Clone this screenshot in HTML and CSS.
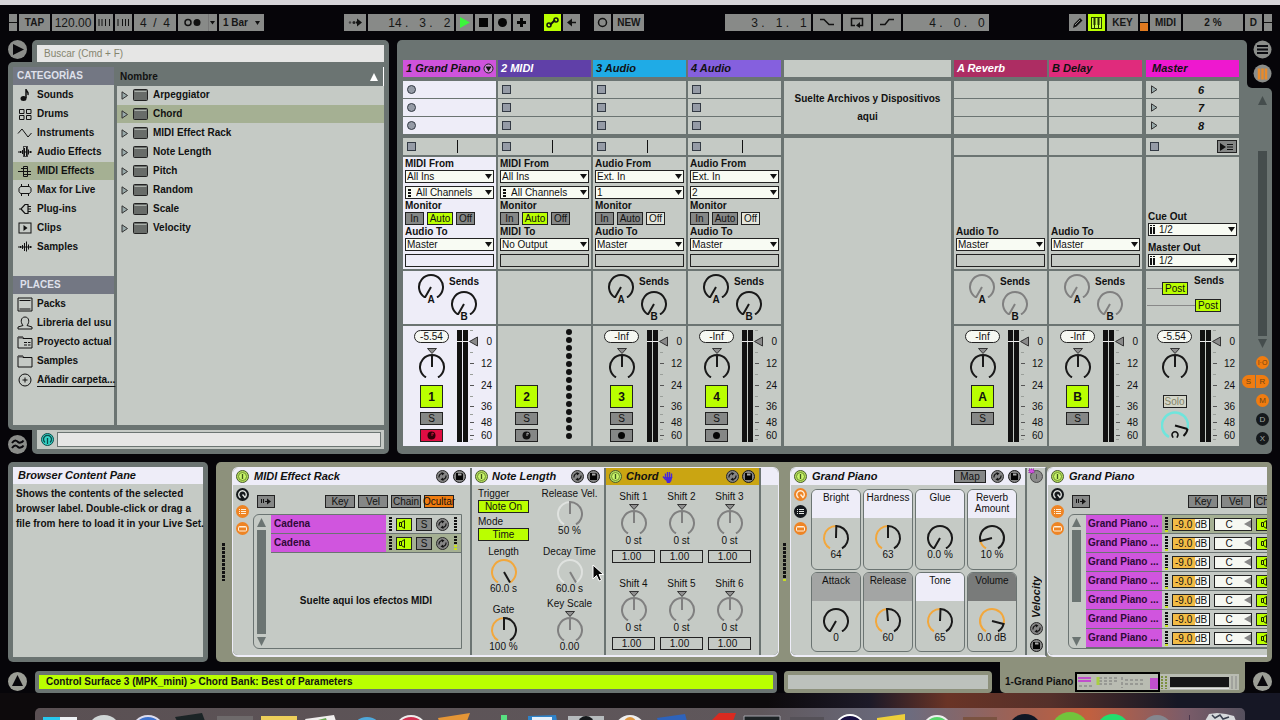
FILE: index.html
```html
<!DOCTYPE html>
<html lang="es">
<head>
<meta charset="utf-8">
<title>Live Set</title>
<link rel="stylesheet" href="styles.css">
</head>
<body>
<svg class="defs" aria-hidden="true">
  <symbol id="knob-min" viewBox="0 0 28 25"><path d="M14 14L8 24.4A12 12 0 1 1 20 24.4"/></symbol>
  <symbol id="knob-mid" viewBox="0 0 28 31"><path d="M8 30.4A12 12 0 1 1 20 30.4M14 20V8"/><path class="tri" d="M9.500 1.500h9l-4.500 5z"/></symbol>
  <symbol id="power" viewBox="0 0 13 13"><circle cx="6.500" cy="6.500" r="6" fill="#b4e05a" stroke="#4a5a30"/><circle cx="6.500" cy="6.500" r="4" fill="#c9f56a" stroke="#5d7a2a" stroke-width=".8"/><path d="M6.500 4v5" stroke="#3f5a1a" stroke-width="1.300"/></symbol>
  <symbol id="swap" viewBox="0 0 13 13"><circle cx="6.500" cy="6.500" r="6" fill="#858585" stroke="#2a2a2a"/><path d="M3 7.500a3.500 3.500 0 0 1 3-4M10 5.500a3.500 3.500 0 0 1-3 4" fill="none" stroke="#111" stroke-width="1.200"/><path d="M5.500 2l3 1.500-2.500 2zM7.500 11l-3-1.500 2.500-2z" fill="#111"/></symbol>
  <symbol id="save" viewBox="0 0 13 13"><circle cx="6.500" cy="6.500" r="6" fill="#858585" stroke="#1a1a1a"/><path d="M3 3h6l1 1v6H3z" fill="#050505"/><rect x="5" y="3.500" width="3.500" height="2" fill="#aaa"/></symbol>
  <symbol id="macro" viewBox="0 0 13 13"><circle cx="6.500" cy="6.500" r="6.500" class="disc"/><path d="M4.500 9.800a3.800 3.800 0 1 1 4 0M6.500 6.500l2.500 3" fill="none" class="ink" stroke-width="1.400"/></symbol>
  <symbol id="list" viewBox="0 0 13 13"><circle cx="6.500" cy="6.500" r="6.500" class="disc"/><path d="M5 4.500h5M5 6.500h5M5 8.500h5M3 4.500h1M3 6.500h1M3 8.500h1" class="ink"/></symbol>
  <symbol id="panel" viewBox="0 0 13 13"><circle cx="6.500" cy="6.500" r="6.500" class="disc"/><rect x="2.500" y="4.500" width="8" height="4.500" rx="1" fill="none" class="ink"/><path d="M3 5h7" class="ink"/></symbol>
  <symbol id="speaker" viewBox="0 0 12 9"><path d="M3.500 2.500h2v4h-2zM5.500 2.500L8.500 .5v8L5.500 6.500" fill="none" stroke="#182000"/></symbol>
  <symbol id="auto" viewBox="0 0 12 9"><path d="M1.500 2v4M3.500 2v4M5 4.500h3" stroke="#111"/><path d="M7 1.500l4 3-4 3z" fill="#111"/></symbol>
  <symbol id="dots" viewBox="0 0 3 38"><path d="M1.500 0v40" stroke="#111" stroke-width="3" stroke-dasharray="3 1"/></symbol>
  <symbol id="dots-s" viewBox="0 0 3 15"><path d="M1.500 0v15" stroke="#111" stroke-width="3" stroke-dasharray="2 1"/></symbol>
  <symbol id="tri" viewBox="0 0 8 9"><path d="M1 .8v7.400l5.500-3.700z" fill="#9aa" stroke="#333"/></symbol>
  <symbol id="device" viewBox="0 0 15 12"><rect x=".5" y=".5" width="14" height="11" rx="1" class="devbox"/><path d="M1.500 2.500h12" stroke="#aab0aa"/></symbol>
  <symbol id="meter" viewBox="0 0 39 120">
    <path d="M3.500 4v112M9.500 4v112" stroke="#111" stroke-width="5"/><path d="M1 15.500h11" stroke="#eee"/>
    <path d="M13.500 15.500l8-4.500v9z" fill="#8a8a8a" stroke="#333"/>
    <path d="M14 37.500h4M14 59.500h4M14 80.500h4M14 96.500h4M14 109.500h4" stroke="#555"/>
    <path d="M14 4.500h3M14 26.500h3M14 48.500h3M14 70.500h3M14 88.500h3M14 103.500h3M14 113.500h3" stroke="#9a9f9a"/>
  </symbol>
  <symbol id="loud" viewBox="0 0 14 14"><path d="M2.500 6v2M4.500 5v4M6.500 3v8M8.500 1.500v10M10.500 4.500v5M12.500 6v2M0 7h14" stroke="#111"/></symbol>
</svg>

<div class="menubar-edge"></div>

<header class="toolbar">
  <div class="group">
    <span class="stub"></span>
    <button class="tb w31">TAP</button>
    <input class="tb w42 num" aria-label="Tempo" value="120.00">
    <button class="tb w17" aria-label="Nudge down"><svg width="13" height="9"><path d="M1 1v7M4 1v7M7.500 1v7M11.500 1v7" stroke="#111"/></svg></button>
    <button class="tb w17" aria-label="Nudge up"><svg width="13" height="9"><path d="M1 1v7M5.500 1v7M8.500 1v7M11.500 1v7" stroke="#111"/></svg></button>
    <input class="tb w42 num" aria-label="Time signature" value="4  /  4">
    <button class="tb w39" aria-label="Metronome"><svg width="36" height="17"><circle cx="8" cy="8.500" r="3" fill="none" stroke="#111" stroke-width="1.500"/><circle cx="17" cy="8.500" r="3.500" fill="#111"/><path d="M28.500 0v17" stroke="#777"/><path d="M30 7h5l-2.500 3.500z" fill="#111"/></svg></button>
    <select class="tb w45 quant" aria-label="Quantization"><option>1 Bar</option></select>
  </div>
  <div class="group">
    <button class="tb w22" aria-label="Follow"><svg width="14" height="9"><circle cx="2" cy="4.500" r="1.200" fill="#444"/><circle cx="6" cy="4.500" r="1.500" fill="#222"/><path d="M8 4.500h2" stroke="#111" stroke-width="2"/><path d="M9 .5l5 4-5 4z" fill="#111"/></svg></button>
    <output class="tb w86 pos"><span>14 .</span><span>3 .</span><span>2</span></output>
    <button class="tb w17" aria-label="Play"><svg width="11" height="11"><path d="M1 0v11l10-5.500z" fill="#3cf53c"/></svg></button>
    <button class="tb w17" aria-label="Stop"><svg width="9" height="9"><rect width="9" height="9" fill="#050505"/></svg></button>
    <button class="tb w17" aria-label="Record"><svg width="9" height="9"><circle cx="4.500" cy="4.500" r="4.500" fill="#050505"/></svg></button>
    <button class="tb w17" aria-label="Overdub"><svg width="9" height="9"><path d="M4.500 0v9M0 4.500h9" stroke="#050505" stroke-width="3"/></svg></button>
    <button class="tb w17 on space" aria-label="Automation arm"><svg width="13" height="11"><path d="M4 8l5-5" stroke="#111" stroke-width="2"/><circle cx="3" cy="8" r="2" fill="none" stroke="#111" stroke-width="1.500"/><circle cx="10" cy="3" r="2" fill="none" stroke="#111" stroke-width="1.500"/></svg></button>
    <button class="tb w17" aria-label="Re-enable automation"><svg width="9" height="9"><path d="M3 4.500h6" stroke="#111" stroke-width="1.500"/><path d="M5 .5v8l-5-4z" fill="#111"/></svg></button>
    <button class="tb w17 space" aria-label="Session record"><svg width="11" height="11"><circle cx="5.500" cy="5.500" r="4" fill="none" stroke="#111" stroke-width="1.500"/></svg></button>
    <button class="tb w31">NEW</button>
  </div>
  <div class="group">
    <output class="tb w86 pos"><span>3 .</span><span>1 .</span><span>1</span></output>
    <button class="tb w28" aria-label="Punch in"><svg width="16" height="9"><path d="M1 1.500h4l5 5h5" fill="none" stroke="#111" stroke-width="1.500"/></svg></button>
    <button class="tb w28" aria-label="Loop"><svg width="14" height="11"><path d="M5 8.500H1.500v-7h11v7H9" fill="none" stroke="#111" stroke-width="1.500"/><path d="M10 5v6l-4-2.500z" fill="#111"/></svg></button>
    <button class="tb w28" aria-label="Punch out"><svg width="16" height="9"><path d="M1 6.500h5l4-5h5" fill="none" stroke="#111" stroke-width="1.500"/></svg></button>
    <output class="tb w86 pos"><span>4 .</span><span>0 .</span><span>0</span></output>
  </div>
  <div class="group">
    <button class="tb w17" aria-label="Draw mode"><svg width="11" height="12"><path d="M1 11l1-4 6-6 2.500 2.500-6 6z" fill="#111"/><path d="M3 8l5-5" stroke="#8a8c8a"/></svg></button>
    <button class="tb w17 on" aria-label="Computer keyboard"><svg width="11" height="12"><rect x=".5" y=".5" width="10" height="11" fill="#c5ff40" stroke="#223300"/><path d="M3.500 1v7M7.500 1v7" stroke="#223300" stroke-width="2"/><path d="M3.500 8v3M7.500 8v3" stroke="#223300"/></svg></button>
    <button class="tb w31">KEY</button>
    <span class="stub lit"></span>
    <button class="tb w31">MIDI</button>
    <output class="tb w60">2 %</output>
    <button class="tb w17">D</button>
    <span class="stub"></span>
  </div>
</header>

<main class="main">
  <section class="browser">
    <div class="row-top">
      <button class="round" aria-label="Show browser"><svg width="19" height="19"><circle cx="9.500" cy="9.500" r="9.500" fill="#8b8d8a"/><path d="M5 4v11l11-5.500z" fill="#08070b"/></svg></button>
      <div class="search"><input aria-label="Buscar" placeholder="Buscar (Cmd + F)"></div>
    </div>
    <div class="browser-body">
      <nav class="cats">
        <h2>CATEGORÌAS</h2>
        <a href="#"><svg width="14" height="14"><ellipse cx="5.500" cy="10.500" rx="3" ry="2.500" fill="#111"/><path d="M8 10V1c0 3 3 2 2 6" fill="none" stroke="#111" stroke-width="1.500"/></svg>Sounds</a>
        <a href="#"><svg width="14" height="14"><path d="M1.500 2.500h4.500v4H1.500zM8.500 2.500h4.500v4H8.500zM1.500 8.500h4.500v4H1.500zM8.500 8.500h4.500v4H8.500z" fill="none" stroke="#111"/></svg>Drums</a>
        <a href="#"><svg width="14" height="14"><path d="M0 7.500L4 3l6 8 3.500-4" fill="none" stroke="#111"/></svg>Instruments</a>
        <a href="#"><svg width="14" height="14"><use href="#loud" width="14" height="14"/><rect x="5.500" y="1.500" width="4" height="10" fill="none" stroke="#444"/></svg>Audio Effects</a>
        <a href="#" class="sel"><svg width="14" height="14"><path d="M3 4.500h6M0 7.500h13M6 10.500h7M5.500 2.500h4v10h-4z" fill="none" stroke="#111"/></svg>MIDI Effects</a>
        <a href="#"><svg width="14" height="14"><path d="M2.500 3.500h9l1.500 2v3l-1.500 2h-9l-1.500-2v-3zM3.500 1v2M10.500 1v2M3.500 11v2M10.500 11v2" fill="none" stroke="#111"/></svg>Max for Live</a>
        <a href="#"><svg width="14" height="14"><path d="M1 7h2l4-4.500h3v9H7L3 7M10 4.500h3M10 7h3M10 9.500h3" fill="none" stroke="#111" stroke-width="1.200"/></svg>Plug-ins</a>
        <a href="#"><svg width="14" height="14"><rect x="1" y="2" width="12" height="10" fill="none" stroke="#111"/><path d="M5.500 4v6l4-3z" fill="#111"/></svg>Clips</a>
        <a href="#"><svg width="14" height="14"><use href="#loud" width="14" height="14"/></svg>Samples</a>
        <h2 class="places">PLACES</h2>
        <a href="#"><svg width="16" height="15"><path d="M1 1h14v13H1zM2.500 3.500h11M2.500 12h11" fill="none" stroke="#111"/></svg>Packs</a>
        <a href="#"><svg width="16" height="14"><path d="M1 13v-2l5-1.500C3 6 4 1 8 1s5 5 2 8.500l5 1.500v2z" fill="none" stroke="#111"/></svg>Libreria del usu</a>
        <a href="#"><svg width="16" height="14"><path d="M1 13V2h5v1.500h9V13z" fill="none" stroke="#111"/><path d="M1 2h5v1.500H1z" fill="#555"/><path d="M7 7.500h3M11 7.500h2.500M7 10h3M11 10h2.500" stroke="#111"/></svg>Proyecto actual</a>
        <a href="#"><svg width="16" height="14"><path d="M1 13V2h5v1.500h9V13z" fill="none" stroke="#111"/><path d="M1 2h5v1.500H1z" fill="#555"/></svg>Samples</a>
        <a href="#"><svg width="14" height="14"><circle cx="7" cy="7" r="6" fill="none" stroke="#111"/><path d="M7 4.500v5M4.500 7h5" stroke="#111"/></svg><u>Añadir carpeta...</u></a>
      </nav>
      <div class="content">
        <h2>Nombre<svg width="8" height="8"><path d="M4 0l4 8H0z" fill="#fff"/></svg></h2>
        <ul>
          <li><svg width="8" height="9"><use href="#tri"/></svg><svg width="15" height="12"><use href="#device"/></svg>Arpeggiator</li>
          <li class="sel"><svg width="8" height="9"><use href="#tri"/></svg><svg width="15" height="12"><use href="#device"/></svg>Chord</li>
          <li><svg width="8" height="9"><use href="#tri"/></svg><svg width="15" height="12"><use href="#device"/></svg>MIDI Effect Rack</li>
          <li><svg width="8" height="9"><use href="#tri"/></svg><svg width="15" height="12"><use href="#device"/></svg>Note Length</li>
          <li><svg width="8" height="9"><use href="#tri"/></svg><svg width="15" height="12"><use href="#device"/></svg>Pitch</li>
          <li><svg width="8" height="9"><use href="#tri"/></svg><svg width="15" height="12"><use href="#device"/></svg>Random</li>
          <li><svg width="8" height="9"><use href="#tri"/></svg><svg width="15" height="12"><use href="#device"/></svg>Scale</li>
          <li><svg width="8" height="9"><use href="#tri"/></svg><svg width="15" height="12"><use href="#device"/></svg>Velocity</li>
        </ul>
      </div>
    </div>
    <div class="row-bottom">
      <button class="round" aria-label="Groove pool"><svg width="19" height="19"><circle cx="9.500" cy="9.500" r="9.500" fill="#8b8d8a"/><path d="M4 8c3-4 5-2 6-1s4 1 5.500-1.500M4 13c3-4 5-2 6-1s4 1 5.500-1.500" fill="none" stroke="#08070b" stroke-width="2"/></svg></button>
      <div class="preview"><svg width="13" height="13"><circle cx="6.500" cy="6.500" r="6" fill="#35d3c6" stroke="#0c4a4a"/><path d="M4 9.500a4 4 0 1 1 5 0M6.500 5v6" fill="none" stroke="#0c4a4a" stroke-width="1.300"/></svg><input aria-label="Preview"></div>
    </div>
  </section>

  <section class="mixer">
    <div class="tracks">
      <article class="track active">
        <h3 class="c1">1 Grand Piano<svg width="11" height="11"><circle cx="5.500" cy="5.500" r="4.500" fill="#d58ade" stroke="#222"/><path d="M2.500 3.500h6l-3 5z" fill="#111"/></svg></h3>
        <div class="clips"><div><i class="dot"></i></div><div><i class="dot"></i></div><div><i class="dot"></i></div></div>
        <div class="stop"><i class="sq"></i><i class="bar"></i></div>
        <div class="io">
          <label for="t1a">MIDI From</label><select id="t1a"><option>All Ins</option></select>
          <select class="gap ch" aria-label="Channel"><option>All Channels</option></select>
          <p>Monitor</p><div class="mon"><button>In</button><button class="on auto">Auto</button><button>Off</button></div>
          <label for="t1b">Audio To</label><select id="t1b"><option>Master</option></select><div class="slot gap"></div>
        </div>
        <div class="sends"><svg class="knob" width="28" height="32"><use href="#knob-min" height="25"/><text x="14" y="30">A</text></svg><div><p>Sends</p><svg class="knob" width="28" height="32"><use href="#knob-min" height="25"/><text x="14" y="30">B</text></svg></div></div>
        <div class="strip"><div class="ctl"><output class="vol">-5.54</output><svg class="knob" width="28" height="31"><use href="#knob-mid"/></svg><button class="act">1</button><button class="sb">S</button><button class="sb armed" aria-label="Arm"><svg width="9" height="9"><circle cx="4.500" cy="4.500" r="4" fill="#300008"/><path d="M5 5V2l2 1" stroke="#d01040" fill="none"/></svg></button></div><svg class="meter" width="39" height="120"><use href="#meter"/><text x="36" y="19">0</text><text x="36" y="41">12</text><text x="36" y="63">24</text><text x="36" y="84">36</text><text x="36" y="100">48</text><text x="36" y="113">60</text></svg></div>
      </article>
      <article class="track">
        <h3 class="c2">2 MIDI</h3>
        <div class="clips"><div><i class="sq"></i></div><div><i class="sq"></i></div><div><i class="sq"></i></div></div>
        <div class="stop"><i class="sq"></i><i class="bar"></i></div>
        <div class="io">
          <label for="t2a">MIDI From</label><select id="t2a"><option>All Ins</option></select>
          <select class="gap ch" aria-label="Channel"><option>All Channels</option></select>
          <p>Monitor</p><div class="mon"><button>In</button><button class="on auto">Auto</button><button>Off</button></div>
          <label for="t2b">MIDI To</label><select id="t2b"><option>No Output</option></select><div class="slot gap"></div>
        </div>
        <div class="sends"></div>
        <div class="strip"><div class="ctl low"><button class="act">2</button><button class="sb">S</button><button class="sb" aria-label="Arm"><svg width="9" height="9"><circle cx="4.500" cy="4.500" r="4" fill="#111"/><path d="M5 5V2l2 1" stroke="#aaa" fill="none"/></svg></button></div><svg class="meter" width="39" height="120"><path d="M18 6v105" stroke="#111" stroke-width="6" stroke-linecap="round" stroke-dasharray="0 8"/></svg></div>
      </article>
      <article class="track">
        <h3 class="c3">3 Audio</h3>
        <div class="clips"><div><i class="sq"></i></div><div><i class="sq"></i></div><div><i class="sq"></i></div></div>
        <div class="stop"><i class="sq"></i><i class="bar"></i></div>
        <div class="io">
          <label for="t3a">Audio From</label><select id="t3a"><option>Ext. In</option></select>
          <select class="gap" aria-label="Channel"><option>1</option></select>
          <p>Monitor</p><div class="mon"><button>In</button><button class="auto">Auto</button><button class="off">Off</button></div>
          <label for="t3b">Audio To</label><select id="t3b"><option>Master</option></select><div class="slot gap"></div>
        </div>
        <div class="sends"><svg class="knob" width="28" height="32"><use href="#knob-min" height="25"/><text x="14" y="30">A</text></svg><div><p>Sends</p><svg class="knob" width="28" height="32"><use href="#knob-min" height="25"/><text x="14" y="30">B</text></svg></div></div>
        <div class="strip"><div class="ctl"><output class="vol">-Inf</output><svg class="knob" width="28" height="31"><use href="#knob-mid"/></svg><button class="act">3</button><button class="sb">S</button><button class="sb" aria-label="Arm"><svg width="9" height="9"><circle cx="4.500" cy="4.500" r="3.500" fill="#050505"/></svg></button></div><svg class="meter" width="39" height="120"><use href="#meter"/><text x="36" y="19">0</text><text x="36" y="41">12</text><text x="36" y="63">24</text><text x="36" y="84">36</text><text x="36" y="100">48</text><text x="36" y="113">60</text></svg></div>
      </article>
      <article class="track">
        <h3 class="c4">4 Audio</h3>
        <div class="clips"><div><i class="sq"></i></div><div><i class="sq"></i></div><div><i class="sq"></i></div></div>
        <div class="stop"><i class="sq"></i><i class="bar"></i></div>
        <div class="io">
          <label for="t4a">Audio From</label><select id="t4a"><option>Ext. In</option></select>
          <select class="gap" aria-label="Channel"><option>2</option></select>
          <p>Monitor</p><div class="mon"><button>In</button><button class="auto">Auto</button><button class="off">Off</button></div>
          <label for="t4b">Audio To</label><select id="t4b"><option>Master</option></select><div class="slot gap"></div>
        </div>
        <div class="sends"><svg class="knob" width="28" height="32"><use href="#knob-min" height="25"/><text x="14" y="30">A</text></svg><div><p>Sends</p><svg class="knob" width="28" height="32"><use href="#knob-min" height="25"/><text x="14" y="30">B</text></svg></div></div>
        <div class="strip"><div class="ctl"><output class="vol">-Inf</output><svg class="knob" width="28" height="31"><use href="#knob-mid"/></svg><button class="act">4</button><button class="sb">S</button><button class="sb" aria-label="Arm"><svg width="9" height="9"><circle cx="4.500" cy="4.500" r="3.500" fill="#050505"/></svg></button></div><svg class="meter" width="39" height="120"><use href="#meter"/><text x="36" y="19">0</text><text x="36" y="41">12</text><text x="36" y="63">24</text><text x="36" y="84">36</text><text x="36" y="100">48</text><text x="36" y="113">60</text></svg></div>
      </article>
      <div class="drop"><div class="drop-head"></div><p>Suelte Archivos y Dispositivos<br>aqui</p><div class="drop-rest"></div></div>
      <article class="track">
        <h3 class="ca">A Reverb</h3>
        <div class="clips"><div></div><div></div><div></div></div>
        <div class="stop"></div>
        <div class="io end"><label for="tA">Audio To</label><select id="tA"><option>Master</option></select><div class="slot gap"></div></div>
        <div class="sends"><svg class="knob dim" width="28" height="32"><use href="#knob-min" height="25"/><text x="14" y="30">A</text></svg><div><p>Sends</p><svg class="knob dim" width="28" height="32"><use href="#knob-min" height="25"/><text x="14" y="30">B</text></svg></div></div>
        <div class="strip"><div class="ctl"><output class="vol">-Inf</output><svg class="knob" width="28" height="31"><use href="#knob-mid"/></svg><button class="act">A</button><button class="sb">S</button></div><svg class="meter" width="39" height="120"><use href="#meter"/><text x="36" y="19">0</text><text x="36" y="41">12</text><text x="36" y="63">24</text><text x="36" y="84">36</text><text x="36" y="100">48</text><text x="36" y="113">60</text></svg></div>
      </article>
      <article class="track">
        <h3 class="cb">B Delay</h3>
        <div class="clips"><div></div><div></div><div></div></div>
        <div class="stop"></div>
        <div class="io end"><label for="tB">Audio To</label><select id="tB"><option>Master</option></select><div class="slot gap"></div></div>
        <div class="sends"><svg class="knob dim" width="28" height="32"><use href="#knob-min" height="25"/><text x="14" y="30">A</text></svg><div><p>Sends</p><svg class="knob dim" width="28" height="32"><use href="#knob-min" height="25"/><text x="14" y="30">B</text></svg></div></div>
        <div class="strip"><div class="ctl"><output class="vol">-Inf</output><svg class="knob" width="28" height="31"><use href="#knob-mid"/></svg><button class="act">B</button><button class="sb">S</button></div><svg class="meter" width="39" height="120"><use href="#meter"/><text x="36" y="19">0</text><text x="36" y="41">12</text><text x="36" y="63">24</text><text x="36" y="84">36</text><text x="36" y="100">48</text><text x="36" y="113">60</text></svg></div>
      </article>
      <article class="track master">
        <h3 class="cm">Master</h3>
        <div class="clips"><div><svg width="9" height="9"><use href="#tri"/></svg><b>6</b></div><div><svg width="9" height="9"><use href="#tri"/></svg><b>7</b></div><div><svg width="9" height="9"><use href="#tri"/></svg><b>8</b></div></div>
        <div class="stop"><i class="sq"></i><button class="back" aria-label="Back to arrangement"><svg width="14" height="8"><path d="M0 0v8l6-4z" fill="#111"/><path d="M7 1.500h6M7 4h6M7 6.500h6" stroke="#111"/></svg></button></div>
        <div class="io end"><label for="cue">Cue Out</label><select id="cue" class="st"><option>1/2</option></select><label for="mo" class="more">Master Out</label><select id="mo" class="st"><option>1/2</option></select></div>
        <div class="sends posts"><div><i></i><button>Post</button><p>Sends</p></div><div><i class="long"></i><button>Post</button></div></div>
        <div class="strip"><div class="ctl"><output class="vol">-5.54</output><svg class="knob" width="28" height="31"><use href="#knob-mid"/></svg><button class="solo">Solo</button><svg width="28" height="30"><path d="M8 26A13 13 0 1 1 26.500 18" fill="none" stroke="#6fe5dc" stroke-width="2.500"/><path d="M26.500 18q-.5 4-4 7M14 14.500l12.500 3.500" fill="none" stroke="#111" stroke-width="2"/><path d="M12 26a3 3 0 1 1 4 0M11 26h1.500M15.500 26h1.500" fill="none" stroke="#111" stroke-width="1.600"/></svg></div><svg class="meter" width="39" height="120"><use href="#meter"/><text x="36" y="19">0</text><text x="36" y="41">12</text><text x="36" y="63">24</text><text x="36" y="84">36</text><text x="36" y="100">48</text><text x="36" y="113">60</text></svg></div>
      </article>
    </div>
    <aside class="side">
      <div class="views">
        <button class="round" aria-label="Arrangement view"><svg width="19" height="19"><circle cx="9.500" cy="9.500" r="9" fill="#8b8d8a"/><path d="M4 6h11M4 9.500h11M4 13h11" stroke="#0b0b10" stroke-width="2"/></svg></button>
        <button class="round" aria-label="Session view"><svg width="19" height="19"><circle cx="9.500" cy="9.500" r="9" fill="#8b8d8a"/><path d="M6 4.500v11M9.500 4.500v11M13 4.500v11" stroke="#e98a2a" stroke-width="2.500"/></svg></button>
      </div>
      <div class="scroll">
        <svg width="13" height="9"><path d="M6.500 0l4.500 9H2z" fill="#454d4d"/></svg>
        <i class="thumb"></i>
        <svg width="13" height="9"><path d="M6.500 9L11 0H2z" fill="#454d4d"/></svg>
        <button class="pill io-pill">I·O</button>
        <div class="pair"><button class="pill">S</button><button class="pill">R</button></div>
        <button class="pill">M</button>
        <button class="pill dark">D</button>
        <button class="pill dark">X</button>
      </div>
    </aside>
  </section>
</main>

<section class="lower">
  <aside class="info"><div><h2>Browser Content Pane</h2><p>Shows the contents of the selected<br>browser label. Double-click or drag a<br>file from here to load it in your Live Set.</p></div></aside>
  <div class="chainview">
    <div class="devices">
      <svg class="signal" width="3" height="38"><use href="#dots"/></svg>
      <div class="rack">
        <div class="dev rack1">
          <h3><svg width="13" height="13"><use href="#power"/></svg><span>MIDI Effect Rack</span><svg width="13" height="13"><use href="#swap"/></svg><svg width="13" height="13"><use href="#save"/></svg></h3>
          <div class="rackbody">
            <div class="icons"><svg width="13" height="13" class="blk"><use href="#macro"/></svg><svg width="13" height="13" class="org"><use href="#list"/></svg><svg width="13" height="13" class="org"><use href="#panel"/></svg></div>
            <div class="chain">
              <div class="btns"><button class="b18" aria-label="Auto select"><svg width="12" height="9"><use href="#auto"/></svg></button><span></span><button>Key</button><button>Vel</button><button>Chain</button><button class="org-b">Ocultar</button></div>
              <div class="chainbox">
                <div class="sbar"><svg width="9" height="9"><path d="M4.500 0L9 9H0z"/></svg><i></i><svg width="9" height="9"><path d="M4.500 9L9 0H0z"/></svg></div>
                <div class="rows">
                  <div class="crow"><b>Cadena</b><svg width="3" height="15"><use href="#dots-s"/></svg><button class="spk" aria-label="Chain activator"><svg width="12" height="9"><use href="#speaker"/></svg></button><button>S</button><svg width="13" height="13"><use href="#swap"/></svg><svg width="3" height="15"><use href="#dots-s"/></svg></div>
                  <div class="crow sel"><b>Cadena</b><svg width="3" height="15"><use href="#dots-s"/></svg><button class="spk" aria-label="Chain activator"><svg width="12" height="9"><use href="#speaker"/></svg></button><button>S</button><svg width="13" height="13"><use href="#swap"/></svg><svg width="3" height="15"><use href="#dots-s"/><path d="M1.500 9v6" stroke="#c8e020" stroke-width="3" stroke-dasharray="2 1"/></svg></div>
                  <p>Suelte aqui los efectos MIDI</p>
                </div>
              </div>
            </div>
          </div>
        </div>
        <div class="dev notelen">
          <h3><svg width="13" height="13"><use href="#power"/></svg><span>Note Length</span><svg width="13" height="13"><use href="#swap"/></svg><svg width="13" height="13"><use href="#save"/></svg></h3>
          <div class="params">
            <div class="pcol left">
              <p class="l">Trigger</p><button>Note On</button><p class="l m3">Mode</p><button>Time</button>
              <p class="m5">Length</p><svg class="knob" width="28" height="25"><path class="or" d="M8 24.4A12 12 0 1 1 20 24.4"/><path d="M14 14l6 10.400"/></svg><p>60.0 s</p>
              <p class="m9">Gate</p><svg class="knob" width="28" height="25"><path class="or" d="M8 24.4A12 12 0 0 1 14 2"/><path d="M14 14V2A12 12 0 0 1 20 24.400"/></svg><p>100 %</p>
            </div>
            <div class="pcol">
              <p>Release Vel.</p><svg class="knob dim" width="28" height="25"><path class="wh" d="M8 24.4A12 12 0 0 1 14 2"/><path d="M14 14V2A12 12 0 0 1 20 24.400"/></svg><p>50 %</p>
              <p class="m9">Decay Time</p><svg class="knob dim" width="28" height="25"><path class="wh" d="M8 24.4A12 12 0 1 1 20 24.4"/><path d="M14 14l6 10.400"/></svg><p>60.0 s</p>
              <p class="m3">Key Scale</p><svg class="knob dim" width="28" height="31"><use href="#knob-mid"/></svg><p>0.00</p>
            </div>
          </div>
          <svg class="cursor" width="12" height="18"><path d="M1 1v14l3.500-3.500L7 17l2.500-1L7 10.500h4.500z" fill="#050505" stroke="#fff"/></svg>
        </div>
        <div class="dev chord">
          <h3 class="gold"><svg width="13" height="13"><use href="#power"/></svg><span>Chord <svg width="12" height="12"><path d="M3.500 7V2.500M5.500 6V1M7.500 6V1M9.500 7V2.500M1 5.500L4 9" stroke="#4a28d8" stroke-width="1.400"/><path d="M3 6h7.300l-1 4-1.500 2H5z" fill="#4a28d8"/></svg></span><svg width="13" height="13"><use href="#swap"/></svg><svg width="13" height="13"><use href="#save"/></svg></h3>
          <div class="shifts">
            <div><p>Shift 1</p><svg class="knob dim" width="28" height="31"><use href="#knob-mid"/></svg><p>0 st</p><input value="1.00" aria-label="Shift 1 velocity"></div>
            <div><p>Shift 2</p><svg class="knob dim" width="28" height="31"><use href="#knob-mid"/></svg><p>0 st</p><input value="1.00" aria-label="Shift 2 velocity"></div>
            <div><p>Shift 3</p><svg class="knob dim" width="28" height="31"><use href="#knob-mid"/></svg><p>0 st</p><input value="1.00" aria-label="Shift 3 velocity"></div>
            <div><p>Shift 4</p><svg class="knob dim" width="28" height="31"><use href="#knob-mid"/></svg><p>0 st</p><input value="1.00" aria-label="Shift 4 velocity"></div>
            <div><p>Shift 5</p><svg class="knob dim" width="28" height="31"><use href="#knob-mid"/></svg><p>0 st</p><input value="1.00" aria-label="Shift 5 velocity"></div>
            <div><p>Shift 6</p><svg class="knob dim" width="28" height="31"><use href="#knob-mid"/></svg><p>0 st</p><input value="1.00" aria-label="Shift 6 velocity"></div>
          </div>
        </div>
        <div class="dev cap"><h3></h3></div>
      </div>
      <svg class="signal" width="3" height="38"><use href="#dots"/><path d="M0 37h3" stroke="#c8e020" stroke-width="2"/></svg>
      <div class="rack open">
        <div class="dev piano">
          <h3><svg width="13" height="13"><use href="#power"/></svg><span>Grand Piano</span><button>Map</button><svg width="13" height="13"><use href="#swap"/></svg><svg width="13" height="13"><use href="#save"/></svg></h3>
          <div class="rackbody">
            <div class="icons"><svg width="13" height="13" class="org"><use href="#macro"/></svg><svg width="13" height="13" class="blk"><use href="#list"/></svg><svg width="13" height="13" class="org"><use href="#panel"/></svg></div>
            <div class="macros">
              <div><p>Bright</p><svg class="knob" width="28" height="25"><path class="or" d="M8 24.4A12 12 0 0 1 14 2"/><path d="M14 14l.3-12A12 12 0 0 1 20 24.400"/></svg><span>64</span></div>
              <div><p>Hardness</p><svg class="knob" width="28" height="25"><path class="or" d="M8 24.4A12 12 0 0 1 14 2"/><path d="M14 14V2A12 12 0 0 1 20 24.400"/></svg><span>63</span></div>
              <div><p>Glue</p><svg class="knob" width="28" height="25"><use href="#knob-min"/></svg><span>0.0 %</span></div>
              <div><p>Reverb Amount</p><svg class="knob" width="28" height="25"><path class="or" d="M8 24.4A12 12 0 0 1 2.400 17"/><path d="M14 14l-11.600 3A12 12 0 1 1 20 24.400"/></svg><span>10 %</span></div>
              <div class="g1"><p>Attack</p><svg class="knob" width="28" height="25"><use href="#knob-min"/></svg><span>0</span></div>
              <div class="g1"><p>Release</p><svg class="knob" width="28" height="25"><path class="or" d="M8 24.4A12 12 0 0 1 13 2"/><path d="M14 14L13 2A12 12 0 0 1 20 24.400"/></svg><span>60</span></div>
              <div><p>Tone</p><svg class="knob" width="28" height="25"><path class="or" d="M8 24.4A12 12 0 0 1 14 2"/><path d="M14 14l.5-12A12 12 0 0 1 20 24.400"/></svg><span>65</span></div>
              <div class="g2"><p>Volume</p><svg class="knob" width="28" height="25"><path class="or" d="M8 24.4A12 12 0 1 1 25.600 17"/><path d="M14 14l11.600 3A12 12 0 0 1 20 24.400"/></svg><span>0.0 dB</span></div>
            </div>
          </div>
        </div>
        <div class="dev velocity">
          <svg width="17" height="15"><circle cx="8.500" cy="8.500" r="6" fill="#8a8a8a" stroke="#4a4a4a"/><path d="M8.500 6v5" stroke="#555"/><rect x="1" y="1" width="5" height="4" fill="#d055de" stroke="#822a90" stroke-dasharray="1 1"/></svg>
          <h4>Velocity</h4>
          <svg width="13" height="13"><use href="#swap"/></svg><svg width="13" height="13"><use href="#save"/></svg>
        </div>
      </div>
      <div class="rack open inner">
        <div class="dev piano2">
          <h3><svg width="13" height="13"><use href="#power"/></svg><span>Grand Piano</span></h3>
          <div class="rackbody">
            <div class="icons"><svg width="13" height="13" class="blk"><use href="#macro"/></svg><svg width="13" height="13" class="org"><use href="#list"/></svg><svg width="13" height="13" class="org"><use href="#panel"/></svg></div>
            <div class="chain">
              <div class="btns"><button class="b18" aria-label="Auto select"><svg width="12" height="9"><use href="#auto"/></svg></button><span></span><button>Key</button><button>Vel</button><button>Chain</button></div>
              <div class="chainbox">
                <div class="sbar"><svg width="9" height="9"><path d="M4.500 0L9 9H0z"/></svg><i class="short"></i><svg width="9" height="9"><path d="M4.500 9L9 0H0z"/></svg></div>
                <div class="rows">
                  <div class="crow sel"><b>Grand Piano ...</b><svg width="3" height="15"><use href="#dots-s"/><path d="M0 14h3" stroke="#c8e020" stroke-width="2"/></svg><output class="db">-9.0 dB</output><output class="pan">C</output><button class="spk" aria-label="Chain activator"><svg width="12" height="9"><use href="#speaker"/></svg></button></div>
                  <div class="crow"><b>Grand Piano ...</b><svg width="3" height="15"><use href="#dots-s"/><path d="M0 14h3" stroke="#c8e020" stroke-width="2"/></svg><output class="db">-9.0 dB</output><output class="pan">C</output><button class="spk" aria-label="Chain activator"><svg width="12" height="9"><use href="#speaker"/></svg></button></div>
                  <div class="crow"><b>Grand Piano ...</b><svg width="3" height="15"><use href="#dots-s"/><path d="M0 14h3" stroke="#c8e020" stroke-width="2"/></svg><output class="db">-9.0 dB</output><output class="pan">C</output><button class="spk" aria-label="Chain activator"><svg width="12" height="9"><use href="#speaker"/></svg></button></div>
                  <div class="crow"><b>Grand Piano ...</b><svg width="3" height="15"><use href="#dots-s"/><path d="M0 14h3" stroke="#c8e020" stroke-width="2"/></svg><output class="db">-9.0 dB</output><output class="pan">C</output><button class="spk" aria-label="Chain activator"><svg width="12" height="9"><use href="#speaker"/></svg></button></div>
                  <div class="crow"><b>Grand Piano ...</b><svg width="3" height="15"><use href="#dots-s"/><path d="M0 14h3" stroke="#c8e020" stroke-width="2"/></svg><output class="db">-9.0 dB</output><output class="pan">C</output><button class="spk" aria-label="Chain activator"><svg width="12" height="9"><use href="#speaker"/></svg></button></div>
                  <div class="crow"><b>Grand Piano ...</b><svg width="3" height="15"><use href="#dots-s"/><path d="M0 14h3" stroke="#c8e020" stroke-width="2"/></svg><output class="db">-9.0 dB</output><output class="pan">C</output><button class="spk" aria-label="Chain activator"><svg width="12" height="9"><use href="#speaker"/></svg></button></div>
                  <div class="crow"><b>Grand Piano ...</b><svg width="3" height="15"><use href="#dots-s"/><path d="M0 14h3" stroke="#c8e020" stroke-width="2"/></svg><output class="db">-9.0 dB</output><output class="pan">C</output><button class="spk" aria-label="Chain activator"><svg width="12" height="9"><use href="#speaker"/></svg></button></div>
                </div>
              </div>
            </div>
          </div>
        </div>
      </div>
    </div>
  </div>
</section>

<footer class="status">
  <button class="round" aria-label="Info view"><svg width="19" height="19"><circle cx="9.500" cy="9.500" r="9.500" fill="#9c9e96"/><path d="M9.500 3l5.500 11H4z" fill="#08070b"/></svg></button>
  <div class="msg">Control Surface 3 (MPK_mini) &gt; Chord Bank: Best of Parameters</div>
  <div class="clipbox"></div>
  <div class="tab"><span>1-Grand Piano</span>
    <svg width="165" height="20"><rect x="1" y="2" width="163" height="16" fill="#b9bcb2"/><path d="M3 6h13M3 9h13" stroke="#c04fcc" stroke-width="2"/><path d="M4 14h15M24 6h18M24 9h18M24 12h14M47 5v11M50 8h20M50 12h20" stroke="#777" stroke-dasharray="3 2"/><path d="M23 5v8" stroke="#a9cf40" stroke-width="3"/><path d="M75 6h8v11h-8z" fill="#c04fcc"/><path d="M87 4v13M91 4v13" stroke="#7c9040" stroke-width="2" stroke-dasharray="2 1"/><rect x="95" y="5" width="59" height="10" fill="#161616"/><path d="M95 16.500h59" stroke="#e4e4e4"/><path d="M157 4v13M161 4v13" stroke="#888"/><rect x="1" y="1" width="83" height="18" fill="none" stroke="#000" stroke-width="2"/></svg>
  </div>
  <button class="round last" aria-label="Detail view"><svg width="19" height="19"><circle cx="9.500" cy="9.500" r="9.500" fill="#9c9e96"/><path d="M9.500 3l5.500 11H4z" fill="#08070b"/></svg></button>
</footer>

<div class="desktop">
  <div class="dock">
    <svg width="1210" height="13" viewBox="35 707 1210 13">
      <path d="M43 716h17v4H43z" fill="#28c8ee"/><path d="M60 716h17v4H60z" fill="#eef2f5"/>
      <circle cx="104" cy="731" r="17" fill="#cfd6d6"/><circle cx="148" cy="731" r="16" fill="#3f74cf" stroke="#dde" stroke-width="2"/>
      <path d="M175 716l27-4 3 8h-28z" fill="#1b2426"/><path d="M217 715h36v5h-36z" fill="#6e6a6b"/><path d="M261 715h36v5h-36z" fill="#edcf5a"/>
      <path d="M305 718l29-4 2 6h-30z" fill="#f0eeee"/><path d="M318 719l8-2 1 3h-9z" fill="#6cab55"/>
      <circle cx="367" cy="732" r="16" fill="#4fa8da"/><circle cx="411" cy="731" r="16" fill="#d03352" stroke="#eee" stroke-width="2"/>
      <path d="M438 717l32-5-3 8h-28z" fill="#e59636"/><path d="M501 714h6v6h-6z" fill="#58e081"/>
      <path d="M528 715l28-1 1 6h-29z" fill="#2f83c9"/><path d="M532 716h20v4h-20z" fill="#e5f0fa"/>
      <path d="M568 715h36v5h-36z" fill="#b6bbbd"/><circle cx="586" cy="723" r="8" fill="#15191b"/>
      <circle cx="630" cy="730" r="16" fill="#eee"/><circle cx="630" cy="722" r="6" fill="#de9941"/>
      <path d="M657 717l28-4 2 7h-29z" fill="#2e63bb"/><path d="M719 712h17l-3 8h-22z" fill="#d92a20"/>
      <path d="M744 715h36v5h-36z" fill="#1d2325" stroke="#a5a5ad"/><path d="M790 716h34v4h-34z" fill="#555158"/>
      <circle cx="850" cy="729" r="15" fill="#171042" stroke="#fff" stroke-width="2"/>
      <path d="M877 717l28-4v7h-28z" fill="#edcf3a"/><circle cx="937" cy="729" r="14" fill="#58d66b" stroke="#eee" stroke-width="2"/>
      <path d="M963 716h34v4h-34z" fill="#7b5341"/><circle cx="1025" cy="730" r="17" fill="#101725"/>
      <circle cx="1070" cy="730" r="19" fill="#72c33c"/><circle cx="1113" cy="730" r="17" fill="#23dd6d"/><circle cx="1157" cy="730" r="16" fill="#85878f"/>
      <path d="M1189.500 714v6" stroke="#4a354a"/><path d="M1205 720l4-7 8-1 9 1 8 2 2 5z" fill="#d7d9dc"/><path d="M1212 714l3 3 5-3 3 4 6-2" fill="none" stroke="#3b4150" stroke-width="1.500"/>
    </svg>
  </div>
</div>
</body>
</html>
```
FILE: styles.css
```css
:root {
  --panel: #6b7472;
  --surface: #c5cac5;
  --light: #eeedf8;
  --sel: #a5b093;
  --green: #baff00;
  --olive: #8d917c;
  --btn: #858786;
  --line: #222;
  --orange: #f07c10;
  --mag: #d055de;
}
* { box-sizing: border-box; margin: 0; padding: 0; }
body {
  display: flex;
  flex-direction: column;
  min-height: 100vh;
  background: #060509;
  color: #111;
  font: 10px/12px "Liberation Sans", Arial, sans-serif;
  overflow: hidden;
}
button, input, select, output { font: inherit; color: inherit; border-radius: 0; }
button { border: 1px solid var(--line); background: var(--btn); white-space: nowrap; }
svg { display: block; flex: none; }
a { color: inherit; text-decoration: none; }
ul { list-style: none; }
.defs { position: absolute; width: 0; height: 0; }
.round { border: 0; background: none; width: 19px; height: 19px; flex: none; }

.knob { overflow: visible; fill: none; stroke: #191919; stroke-width: 2; }
.knob.dim { stroke: #808080; }
.knob text { font-weight: bold; text-anchor: middle; fill: #111; stroke: none; }
.tri { fill: #8f8f8f; stroke: #333; stroke-width: 1; }
.or { stroke: #f2a73c; }
.wh { stroke: #dfe2df; }

/* Transport */
.menubar-edge { height: 5px; background: #d6d4d8; }
.toolbar { display: flex; justify-content: space-between; padding: 9px 8px 9px 9px; }
.group { display: flex; gap: 2px; }
.tb {
  display: flex; align-items: center; justify-content: center;
  height: 17px; border: 0; background: #888a88; color: #161616;
  font-weight: bold; text-align: center;
}
.tb.on { background: var(--green); }
.tb.num, .tb.pos { font-weight: normal; font-size: 12px; white-space: pre; }
.tb.pos { justify-content: flex-end; gap: 11px; padding-right: 4px; }
.space { margin-left: 12px; }
.quant { appearance: none; text-align: left; padding-left: 4px; background: #888a88 url("data:image/svg+xml,%3Csvg xmlns='http://www.w3.org/2000/svg' width='5' height='4'%3E%3Cpath d='M0 0h5L2.500 4z' fill='%23111'/%3E%3C/svg%3E") no-repeat right 4px center; }
.w17 { width: 17px; } .w22 { width: 22px; } .w28 { width: 28px; } .w31 { width: 31px; }
.w39 { width: 39px; } .w42 { width: 42px; } .w45 { width: 45px; } .w60 { width: 60px; } .w86 { width: 86px; }
.stub { width: 8px; background: linear-gradient(#888a88 8px, #111 8px, #111 9px, #888a88 9px); }
.stub.lit { background: linear-gradient(#888a88 8px, #111 8px, #111 9px, #e07a20 9px); }

/* Browser */
.main { flex: 1; display: flex; gap: 8px; padding: 0 8px; }
.browser { display: flex; flex-direction: column; width: 381px; flex: none; }
.row-top, .row-bottom { display: flex; gap: 5px; }
.search { flex: 1; padding: 5px 5px 0; background: var(--panel); border-radius: 5px 5px 0 0; }
.search input { display: block; width: 100%; height: 17px; border: 0; padding-left: 7px; background: #e6e6e5; }
.search input::placeholder { color: #85856f; opacity: 1; }
.browser-body { flex: 1; display: flex; gap: 3px; padding: 5px; background: var(--panel); border-radius: 5px 0 0 5px; font-weight: bold; }
.cats { width: 101px; background: var(--surface); }
.cats h2 { height: 18px; line-height: 18px; padding-left: 4px; background: #737783; color: #dfe0ea; font-size: 10px; }
.cats h2.places { margin-top: 20px; padding-left: 7px; }
.cats a { display: flex; align-items: center; height: 18px; margin-top: 1px; white-space: nowrap; }
.cats a svg { width: 24px; padding: 0 5px; overflow: visible; }
.cats a svg[width="16"] { padding: 0 4px; }
.cats u { text-underline-offset: 3px; }
.sel { background: var(--sel); }
.content { flex: 1; display: flex; flex-direction: column; }
.content h2 { display: flex; justify-content: space-between; align-items: center; height: 19px; padding: 0 5px 0 3px; font-size: 10px; background: var(--panel); border-right: 1px solid #fff; }
.content ul { flex: 1; background: var(--surface); }
.content li { display: flex; align-items: center; height: 18px; margin-bottom: 1px; padding-left: 4px; }
.content li svg + svg { margin: 0 5px 0 4px; }
.devbox { fill: #686c69; stroke: #222; }
.row-bottom .round { margin-top: 5px; }
.preview { flex: 1; display: flex; align-items: center; gap: 3px; height: 24px; padding: 0 5px 5px; background: linear-gradient(var(--surface), var(--surface)) content-box, var(--panel); border-radius: 0 0 5px 5px; }
.preview svg { margin-left: 4px; }
.preview input { flex: 1; height: 15px; margin-right: 3px; border: 1px solid var(--panel); background: #e6e6e5; }

/* Mixer */
.mixer { flex: 1; display: flex; }
.tracks { flex: 1; display: flex; gap: 2px; padding: 20px 8px 8px 6px; background: var(--panel); border-radius: 5px 5px 0 5px; }
.track { display: flex; flex-direction: column; gap: 2px; width: 93px; flex: none; }
.track h3 { display: flex; align-items: center; justify-content: space-between; height: 17px; padding: 0 2px 0 3px; margin-bottom: 2px; font: italic bold 11px/17px "Liberation Sans", Arial, sans-serif; white-space: nowrap; }
.c1 { background: #cf53dc; } .c2 { background: #6040a8; color: #fff; } .c3 { background: #1fabe6; } .c4 { background: #8560de; }
.ca { background: #ad2d63; color: #fff; } .cb { background: #e02b7c; } .cm { background: #ee18cf; }
.clips { display: flex; flex-direction: column; gap: 1px; margin-bottom: 2px; }
.clips > div, .stop { display: flex; align-items: center; height: 17px; padding: 0 4px; background: var(--surface); }
.active .clips > div, .active .io, .active .sends, .active .strip { background: var(--light); }
.sq, .dot { width: 9px; height: 9px; border: 1px solid #333a44; background: #959ba6; }
.dot { border-radius: 50%; }
.bar { width: 1px; height: 13px; margin-left: 41px; background: #111; }
.clips b { flex: 1; padding-left: 8px; text-align: center; font-style: italic; font-size: 11px; }
.back { display: flex; align-items: center; justify-content: center; width: 20px; height: 13px; margin: 0 -2px 0 auto; }
.io { display: flex; flex-direction: column; height: 112px; padding: 0 2px 2px; background: var(--surface); }
.io.end { justify-content: flex-end; }
.io label, .io p { height: 13px; line-height: 13px; font-weight: bold; }
.io select, .slot { height: 13px; flex: none; border: 1px solid var(--line); }
.io select { appearance: none; width: 100%; padding-left: 1px; line-height: 11px; background: #f8fbf3 url("data:image/svg+xml,%3Csvg xmlns='http://www.w3.org/2000/svg' width='7' height='5'%3E%3Cpath d='M0 0h7L3.500 5z' fill='%23111'/%3E%3C/svg%3E") no-repeat right 1px center; }
.io select.ch { padding-left: 10px; background-image: url("data:image/svg+xml,%3Csvg xmlns='http://www.w3.org/2000/svg' width='7' height='5'%3E%3Cpath d='M0 0h7L3.500 5z' fill='%23111'/%3E%3C/svg%3E"), url("data:image/svg+xml,%3Csvg xmlns='http://www.w3.org/2000/svg' width='3' height='8'%3E%3Cpath d='M0 0h3v2H0zM0 3h3v2H0zM0 6h3v2H0z' fill='%23111'/%3E%3C/svg%3E"); background-position: right 1px center, 2px center; background-repeat: no-repeat; }
.io select.st { padding-left: 10px; background-image: url("data:image/svg+xml,%3Csvg xmlns='http://www.w3.org/2000/svg' width='7' height='5'%3E%3Cpath d='M0 0h7L3.500 5z' fill='%23111'/%3E%3C/svg%3E"), url("data:image/svg+xml,%3Csvg xmlns='http://www.w3.org/2000/svg' width='5' height='9'%3E%3Cpath d='M0 0h2v1H0zM3 0h2v1H3zM0 2h2v7H0zM3 2h2v7H3z' fill='%23111'/%3E%3C/svg%3E"); background-position: right 1px center, 1px center; background-repeat: no-repeat; }
.gap { margin-top: 3px; }
.io .more { margin-top: 5px; }
.mon { display: flex; gap: 3px; }
.mon button { width: 19px; height: 13px; line-height: 11px; }
.mon .auto { width: 26px; }
.mon .on { background: var(--green); }
.mon .off { background: #e4e6dc; }
.sends { display: flex; gap: 2px; height: 53px; padding: 2px 0 0 14px; background: var(--surface); }
.sends > div { width: 34px; }
.sends > div svg { margin: 2px auto 0; }
.sends p { padding-top: 3px; text-align: center; font-weight: bold; }
.posts { flex-direction: column; gap: 4px; padding: 11px 0 0 1px; }
.posts > div { display: flex; align-items: flex-start; width: auto; height: 13px; }
.posts i { width: 15px; height: 1px; margin-top: 6px; background: #888; }
.posts i.long { width: 48px; }
.posts button { width: 26px; height: 13px; line-height: 11px; background: var(--green); }
.posts p { padding: 0 0 0 6px; margin-top: -7px; }
.strip { flex: 1; display: flex; min-height: 120px; background: var(--surface); }
.meter text { font-size: 10px; text-anchor: end; fill: #111; }
.ctl { display: flex; flex-direction: column; align-items: center; width: 53px; padding: 4px 0 0 4px; }
.ctl.low { padding-top: 59px; }
.vol { width: 35px; height: 13px; margin-bottom: 4px; border: 1px solid var(--line); border-radius: 7px; background: #f6f8f2; line-height: 11px; text-align: center; flex: none; }
.act { width: 23px; height: 23px; margin: 7px 0 4px; background: var(--green); font-weight: bold; font-size: 12px; flex: none; }
.low .act { margin-top: 0; }
.sb { display: flex; align-items: center; justify-content: center; width: 23px; height: 13px; margin-bottom: 4px; line-height: 11px; flex: none; }
.armed { background: #e00d43; }
.solo { width: 24px; height: 13px; margin: 17px 0 3px; line-height: 11px; background: #d3d5c8; color: #848468; }
.drop { flex: 1; display: flex; flex-direction: column; gap: 4px; margin: 0 1px; text-align: center; font-weight: bold; }
.drop-head { height: 17px; background: var(--surface); }
.drop p { height: 53px; padding-top: 9px; line-height: 18px; background: var(--surface); }
.drop-rest { flex: 1; background: var(--surface); }
.master { margin-left: 2px; }
.master h3 { padding-left: 6px; }
.side { display: flex; flex-direction: column; width: 25px; background: linear-gradient(var(--panel), var(--panel)) 0 100% / 5px calc(100% - 30px) no-repeat; }
.views { display: flex; flex-direction: column; align-items: flex-end; gap: 5px; height: 48px; background: #060509; border-radius: 0 0 0 5px; }
.scroll { flex: 1; display: flex; flex-direction: column; align-items: flex-end; gap: 6px; padding: 8px 3px 9px 0; background: var(--panel); border-radius: 0 5px 5px 0; }
.scroll > svg:nth-of-type(2) { margin: -3px 0 2px; }
.thumb { flex: 1; width: 9px; margin: 40px 2px 0 0; background: #454d4d; }
.pill { width: 13px; height: 13px; border: 0; border-radius: 7px; background: var(--orange); color: #6f4210; font-size: 8px; line-height: 13px; text-align: center; }
.pair { display: flex; gap: 1px; margin-left: -4px; }
.pair .pill:first-child { border-radius: 7px 0 0 7px; }
.pair .pill:last-child { border-radius: 0 7px 7px 0; }
.io-pill { font-size: 7px; }
.dark { background: #15191c; color: #a5aaa5; }

/* Lower panes */
.lower { display: flex; gap: 8px; min-height: 199px; margin-top: 8px; padding: 0 8px; }
.info { width: 200px; flex: none; display: flex; padding: 5px; border-radius: 5px; background: var(--panel); }
.info div { flex: 1; min-width: 0; background: var(--surface); }
.info h2 { height: 17px; padding-left: 5px; background: var(--light); font: italic bold 11px/17px "Liberation Sans", Arial, sans-serif; }
.info p { padding: 2px 0 0 3px; font-weight: bold; line-height: 15px; white-space: nowrap; }
.chainview { flex: 1; min-width: 0; display: flex; padding: 5px; background: var(--olive); border-radius: 5px; }
.devices { flex: 1; min-width: 0; display: flex; overflow: hidden; }
.signal { align-self: center; margin: 0 4px 0 2px; }
.signal:first-child { margin: 0 7px 0 1px; }
.rack { display: flex; gap: 2px; flex: none; border: 1px solid var(--light); border-bottom-width: 2px; border-radius: 6px; background: var(--panel); overflow: hidden; }
.rack + .signal { margin-left: 4px; }
.rack.open { border-right: 2px solid var(--panel); border-radius: 6px 0 0 6px; }
.rack.inner { border-left: 1px solid var(--light); }
.dev { position: relative; display: flex; flex-direction: column; background: var(--surface); }
.dev h3 { display: flex; align-items: center; gap: 4px; height: 17px; padding: 0 4px 0 3px; background: var(--light); font: italic bold 11px/17px "Liberation Sans", Arial, sans-serif; white-space: nowrap; }
.notelen h3, .chord h3 { gap: 3px; }
.dev h3 span { flex: 1; display: flex; gap: 4px; align-items: center; padding-left: 1px; }
.dev h3 button { width: 32px; height: 13px; margin-right: 1px; font: 10px/11px "Liberation Sans", Arial, sans-serif; }
.dev h3.gold { background: #caa512; }
.rack1 { width: 237px; }
.notelen { width: 132px; }
.chord { width: 153px; }
.cap { width: 17px; }
.piano { width: 234px; }
.piano2 { width: 244px; }
.rackbody { flex: 1; display: flex; gap: 4px; padding: 3px 8px 6px 3px; }
.icons { display: flex; flex-direction: column; gap: 4px; }
.org { --d: #ee8424; --i: #fff0dc; } .blk { --d: #15191c; --i: #e0e4e0; }
.disc { fill: var(--d); } .ink { stroke: var(--i); }
.chain { flex: 1; min-width: 0; display: flex; flex-direction: column; }
.btns { display: flex; gap: 3px; padding: 7px 8px 6px 4px; }
.piano2 .btns { padding-right: 0; }
.btns span { flex: 1; }
.btns button { flex: none; width: 30px; height: 13px; line-height: 11px; display: flex; justify-content: center; }
.btns .b18 { width: 18px; align-items: center; }
.btns .org-b { background: var(--orange); }
.chainbox { flex: 1; display: flex; gap: 5px; border: 1px solid var(--panel); border-radius: 6px 0 0 6px; overflow: hidden; }
.sbar { display: flex; flex-direction: column; align-items: center; gap: 3px; width: 9px; margin: 3px 0 2px 3px; fill: var(--panel); }
.sbar i { flex: 1; width: 9px; background: var(--panel); }
.sbar i.short { flex: none; height: 72px; margin-bottom: auto; }
.rows { flex: 1; display: flex; flex-direction: column; }
.crow { display: flex; align-items: center; height: 19px; border-bottom: 1px solid var(--panel); }
.crow b { flex: 1; align-self: stretch; padding-left: 3px; margin-right: 3px; background: var(--mag); line-height: 18px; white-space: nowrap; color: #2d0a36; }
.piano2 .crow b { flex: none; width: 76px; padding-left: 2px; }
.crow button { display: flex; align-items: center; justify-content: center; width: 16px; height: 13px; margin-left: 4px; line-height: 11px; }
.crow .spk { background: var(--green); }
.rack1 .crow button + svg { margin: 0 5px 0 4px; }
.rack1 .crow svg:last-child { margin-right: 4px; }
.rows p { margin: auto; font-weight: bold; }
.params { flex: 1; display: flex; padding-top: 3px; }
.pcol { flex: 1; display: flex; flex-direction: column; align-items: center; white-space: nowrap; }
.pcol.left { flex: none; width: 63px; }
.pcol button { width: 51px; height: 13px; line-height: 11px; background: var(--green); }
.pcol .l { align-self: flex-start; padding-left: 6px; }
.m3 { margin-top: 3px; } .m5 { margin-top: 5px; } .m9 { margin-top: 9px; }
.cursor { position: absolute; left: 120px; top: 96px; z-index: 2; }
.shifts { display: grid; grid-template-columns: repeat(3, 48px); justify-content: center; row-gap: 14px; padding: 5px 2px 0 0; }
.shifts div { display: flex; flex-direction: column; align-items: center; }
.shifts p { line-height: 13px; }
.shifts input { width: 43px; height: 13px; margin-top: 3px; padding-right: 4px; border: 1px solid var(--line); background: transparent; text-align: center; }
.macros { display: grid; grid-template-columns: repeat(4, 1fr); gap: 2px; flex: 1; padding-top: 1px; margin-bottom: -3px; }
.macros > div { display: flex; flex-direction: column; align-items: center; border: 1px solid var(--panel); border-radius: 6px; overflow: hidden; }
.macros p { width: 100%; height: 28px; padding-top: 2px; margin-bottom: 6px; line-height: 11px; text-align: center; background: var(--light); }
.macros .g1 p { background: #a3a5a4; }
.macros .g2 p { background: #797b7a; }
.velocity { align-items: center; gap: 4px; width: 18px; padding-bottom: 3px; background: var(--surface); }
.velocity h4 { flex: 1; writing-mode: vertical-rl; transform: rotate(180deg); font: italic bold 11px/14px "Liberation Sans", Arial, sans-serif; }
.db, .pan { flex: none; height: 13px; border: 1px solid var(--line); background: #f6f8f2; line-height: 11px; white-space: nowrap; }
.db { width: 38px; margin-left: 4px; padding-left: 2px; background: linear-gradient(90deg, #f2bb45 22px, #f6f8f2 22px); }
.pan { width: 38px; margin-left: 4px; padding-right: 8px; text-align: center; background: #f6f8f2 url("data:image/svg+xml,%3Csvg xmlns='http://www.w3.org/2000/svg' width='7' height='8'%3E%3Cpath d='M7 0v8L0 4z' fill='%23888'/%3E%3C/svg%3E") no-repeat right center; }

/* Status line */
.status { display: flex; align-items: flex-end; height: 31px; padding: 0 8px; font-weight: bold; }
.status .round { margin-bottom: 2px; }
.msg { flex: 1; height: 22px; margin-left: 8px; padding-left: 7px; border: 4px solid var(--panel); border-radius: 4px; background: var(--green); line-height: 14px; white-space: nowrap; }
.clipbox { width: 208px; height: 22px; margin: 0 8px 0 7px; border: 4px solid var(--olive); border-radius: 4px; background: #bcc1bc; }
.tab { display: flex; align-items: center; justify-content: space-between; width: 245px; height: 31px; padding: 9px 5px 0; background: var(--olive); border-radius: 0 0 5px 5px; }
.status .last { margin-left: 8px; }
.desktop { height: 28px; display: flex; padding: 15px 35px 0; background: linear-gradient(90deg, #0d0a0c 0 60%, #1d1a28 68%, #6a3426 74%, #55302a 82%, #161725 92%); }
.dock { flex: 1; overflow: hidden; border-radius: 5px 5px 0 0; background: linear-gradient(90deg, #5a5053 0, #5f575b 60%, #6b6c80 72%, #a4604f 82%, #c2603f 87%, #7b5c69 95%, #55505e 100%); }
```
